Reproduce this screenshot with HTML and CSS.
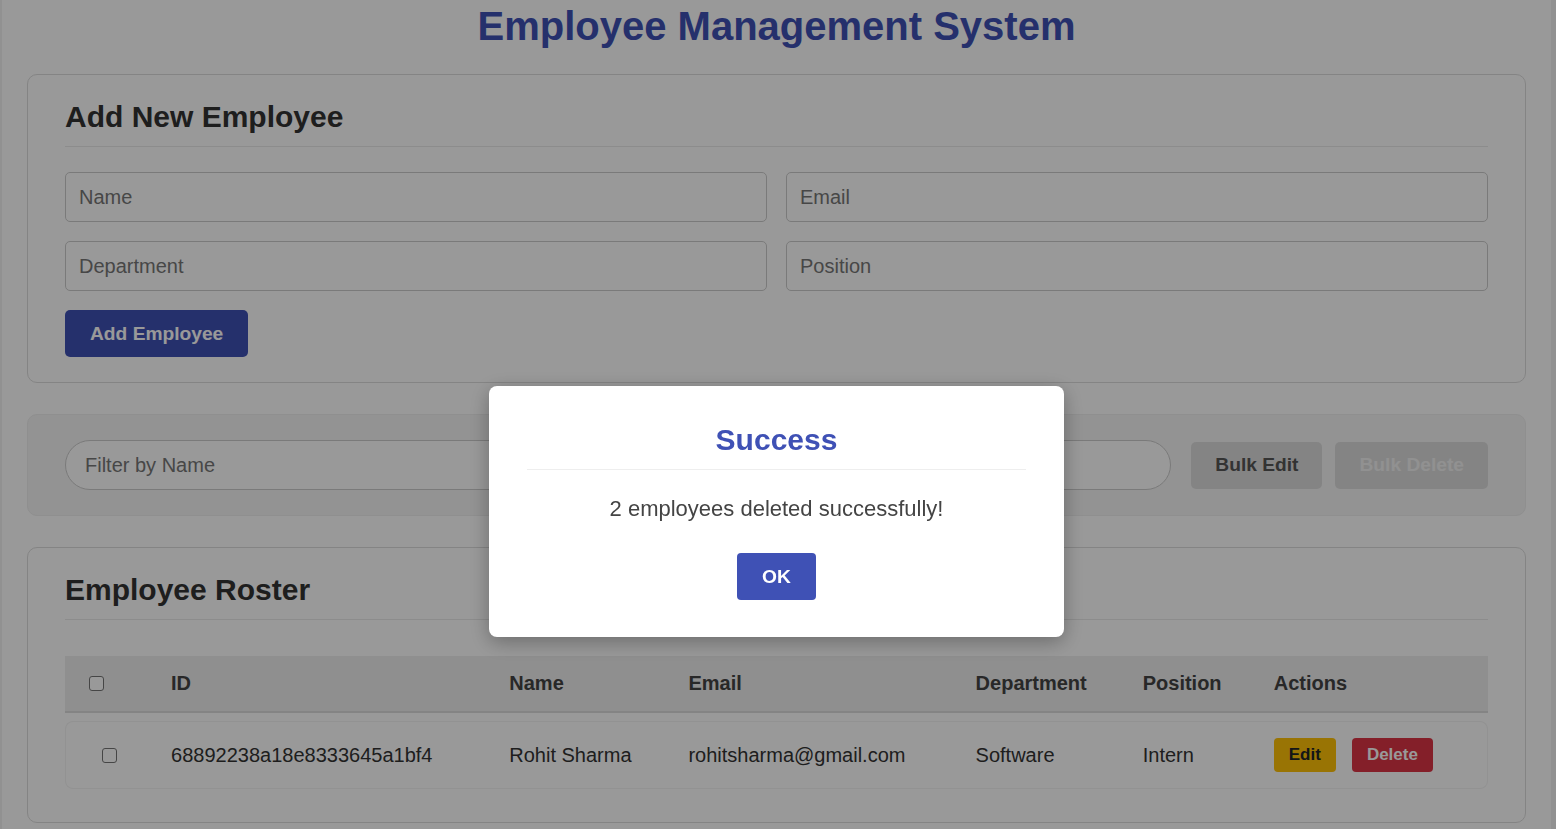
FILE: index.html
```html
<!DOCTYPE html>
<html lang="en">
<head>
<meta charset="utf-8">
<title>Employee Management System</title>
<link rel="stylesheet" href="styles.css">
</head>
<body>
<div class="app">
  <h1 class="title">Employee Management System</h1>

  <section class="card">
    <h2 class="card-title">Add New Employee</h2>
    <form class="form-grid">
      <input class="field" type="text" placeholder="Name">
      <input class="field" type="text" placeholder="Email">
      <input class="field" type="text" placeholder="Department">
      <input class="field" type="text" placeholder="Position">
    </form>
    <button class="btn btn-primary">Add Employee</button>
  </section>

  <section class="card card-filter">
    <input class="field field-round" type="text" placeholder="Filter by Name">
    <button class="btn btn-grey">Bulk Edit</button>
    <button class="btn btn-grey btn-disabled">Bulk Delete</button>
  </section>

  <section class="card">
    <h2 class="card-title">Employee Roster</h2>
    <table class="roster">
      <colgroup>
        <col class="c-check"><col class="c-id"><col class="c-name"><col class="c-email"><col class="c-dept"><col class="c-pos"><col class="c-act">
      </colgroup>
      <thead>
        <tr>
          <th><span class="check"></span></th>
          <th>ID</th>
          <th>Name</th>
          <th>Email</th>
          <th>Department</th>
          <th>Position</th>
          <th>Actions</th>
        </tr>
      </thead>
      <tbody>
        <tr>
          <td><span class="check check-row"></span></td>
          <td>68892238a18e8333645a1bf4</td>
          <td>Rohit Sharma</td>
          <td>rohitsharma@gmail.com</td>
          <td>Software</td>
          <td>Intern</td>
          <td><span class="actions"><button class="btn-sm btn-edit">Edit</button><button class="btn-sm btn-delete">Delete</button></span></td>
        </tr>
      </tbody>
    </table>
  </section>
</div>

<div class="overlay">
  <div class="modal">
    <h3 class="modal-title">Success</h3>
    <p class="modal-msg">2 employees deleted successfully!</p>
    <button class="btn btn-ok">OK</button>
  </div>
</div>
</body>
</html>
```

FILE: styles.css
```css
html, body {
  margin: 0;
  padding: 0;
  background: #f2f2f2;
}
body {
  font-family: "Liberation Sans", Arial, sans-serif;
  color: #333;
}
.app {
  margin: 0 5px 0 2px;
  padding: 0 25px 6px;
  background: #ffffff;
  min-height: 829px;
  box-sizing: border-box;
}
.title {
  margin: 0 0 22px;
  font-size: 40px;
  line-height: 52px;
  font-weight: 700;
  text-align: center;
  color: #3f51b5;
}
.card {
  border: 1px solid #dddddd;
  border-radius: 10px;
  background: #ffffff;
  padding: 25px 37px 25px;
  margin-bottom: 31px;
}
.card-title {
  margin: 0;
  font-size: 30px;
  line-height: 34px;
  font-weight: 700;
  color: #333;
  padding-bottom: 12px;
  border-bottom: 1px solid #e9e9e9;
}
.form-grid {
  display: grid;
  grid-template-columns: 1fr 1fr;
  gap: 19px;
  margin: 25px 0 19px;
}
.field {
  box-sizing: border-box;
  height: 50px;
  border: 1px solid #cccccc;
  border-radius: 5px;
  padding: 0 13px;
  font-family: "Liberation Sans", Arial, sans-serif;
  font-size: 20px;
  color: #333;
  background: #fff;
  outline: none;
}
.field::placeholder {
  color: #777;
}
.btn {
  font-family: "Liberation Sans", Arial, sans-serif;
  font-size: 19.2px;
  font-weight: 700;
  height: 47px;
  padding: 0 25px;
  border: none;
  border-radius: 5px;
  cursor: pointer;
}
.btn-primary {
  background: #3f51b5;
  color: #fff;
}
.card-filter {
  display: flex;
  align-items: center;
  background: #f5f5f5;
  border-color: #eeeeee;
  padding: 25px 37px;
}
.field-round {
  flex: 1;
  border-radius: 25px;
  padding: 0 19px;
  margin-right: 20px;
}
.btn-grey {
  background: #dddddd;
  color: #555;
  padding: 0 24px;
}
.btn-grey + .btn-grey {
  margin-left: 13px;
}
.btn-disabled {
  color: #f2f2f2;
}
.roster {
  width: 100%;
  table-layout: fixed;
  border-collapse: separate;
  border-spacing: 0 8px;
  margin-top: 28px;
  font-size: 20px;
}
.c-check { width: 82px; }
.c-id { width: 338px; }
.c-name { width: 179px; }
.c-email { width: 287px; }
.c-dept { width: 167px; }
.c-pos { width: 131px; }
.c-act { width: 238px; }
.roster th {
  background: #eeeeee;
  border-bottom: 2px solid #dddddd;
  height: 55px;
  padding: 0 24px;
  text-align: left;
  font-weight: 700;
  color: #444;
  vertical-align: middle;
}
.roster td {
  background: #ffffff;
  padding: 16px 24px;
  height: 34px;
  color: #333;
  vertical-align: middle;
  white-space: nowrap;
  border-top: 1px solid #f3f3f3;
  border-bottom: 1px solid #f3f3f3;
}
.roster td:first-child {
  border-left: 1px solid #f3f3f3;
  border-radius: 8px 0 0 8px;
}
.roster td:last-child {
  border-right: 1px solid #f3f3f3;
  border-radius: 0 8px 8px 0;
}
.check {
  display: block;
  box-sizing: border-box;
  width: 15px;
  height: 15px;
  border: 1.5px solid #767676;
  border-radius: 3px;
  background: #fff;
}
.check-row {
  margin-left: 12px;
}
.actions {
  display: flex;
  gap: 16px;
}
.btn-sm {
  font-family: "Liberation Sans", Arial, sans-serif;
  font-size: 17px;
  font-weight: 700;
  height: 34px;
  padding: 0 15px;
  border: none;
  border-radius: 4px;
}
.btn-edit {
  background: #ffc107;
  color: #212529;
}
.btn-delete {
  background: #dc3545;
  color: #fff;
}
.overlay {
  position: fixed;
  inset: 0;
  background: rgba(0, 0, 0, 0.4);
  display: flex;
  justify-content: center;
  align-items: flex-start;
  padding-top: 386px;
  padding-right: 3px;
  box-sizing: border-box;
}
.modal {
  width: 575px;
  box-sizing: border-box;
  background: #fff;
  border-radius: 8px;
  padding: 36px 38px 37px;
  text-align: center;
  box-shadow: 0 5px 20px rgba(0, 0, 0, 0.3);
}
.modal-title {
  margin: 0;
  font-size: 30px;
  line-height: 36px;
  font-weight: 700;
  color: #3f51b5;
  padding-bottom: 11px;
  border-bottom: 1px solid #eeeeee;
}
.modal-msg {
  margin: 26px 0 31px;
  font-size: 22px;
  line-height: 26px;
  color: #444;
}
.btn-ok {
  background: #3f51b5;
  color: #fff;
  border-radius: 4px;
}
```
